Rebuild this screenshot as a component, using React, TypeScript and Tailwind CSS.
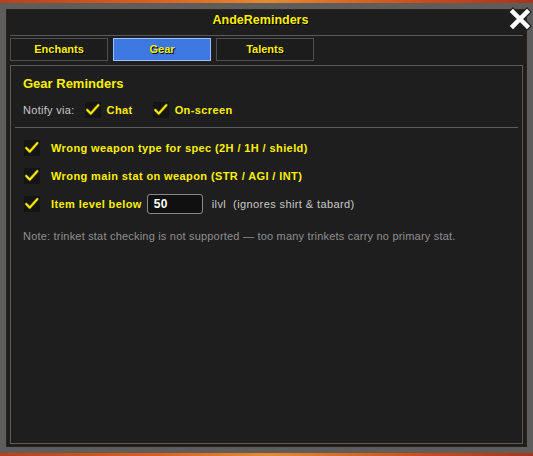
const font = { fontFamily: '"Liberation Sans", Arial, sans-serif' };

function Check() {
  return (
    <span className="flex h-[16px] w-[16px] shrink-0 items-center justify-center bg-[#141414]">
      <svg width="18" height="16" viewBox="0 0 18 16">
        <path d="M2.5 8 L6.5 12 L15 2.5" fill="none" stroke="#6b5a00" strokeWidth="3.5" strokeLinecap="round" strokeLinejoin="round" />
        <path d="M2.5 8 L6.5 12 L15 2.5" fill="none" stroke="#fff000" strokeWidth="2" strokeLinecap="round" strokeLinejoin="round" />
      </svg>
    </span>
  );
}

function Tab({ label, active }: { label: string; active?: boolean }) {
  return (
    <div
      className={
        active
          ? "flex h-[23px] w-[98px] items-center justify-center border border-[#9fc2ff] bg-[#3c78e0] text-[11px] font-bold text-[#fff000] [text-shadow:1px_1px_0_#000]"
          : "flex h-[23px] w-[98px] items-center justify-center border border-[#4e4e4e] bg-[#1c1c1c] text-[11px] font-bold text-[#fff000] [text-shadow:1px_1px_0_#000]"
      }
    >
      {label}
    </div>
  );
}

function Row({ children }: { children: React.ReactNode }) {
  return (
    <div className="flex h-[20px] items-center pl-[13px] text-[11px] font-bold tracking-[0.4px] text-[#fff000]">
      <Check />
      <span className="ml-[11px] flex items-center">{children}</span>
    </div>
  );
}

export default function App() {
  return (
    <div className="h-[456px] w-[533px] overflow-hidden bg-[linear-gradient(90deg,#b8401a,#d9621f_30%,#e7892f_50%,#c84b1b_80%,#a8351a)] py-[3px]" style={font}>
      <div className="relative flex h-full flex-col border-[6px] border-[#5d5d5d] bg-[#1e1e1e] shadow-[inset_0_0_0_1px_#2a2414]">
        <div className="flex h-[22px] items-center justify-center pr-[12px] text-[12.5px] font-bold text-[#fff000] [text-shadow:1px_1px_0_#000]">
          AndeReminders
        </div>
        <div className="mx-[4px] mt-[4px] h-px bg-[#5a5a5a]" />
        <div className="mx-[4px] mt-[2px] flex gap-[5px]">
          <Tab label="Enchants" />
          <Tab label="Gear" active />
          <Tab label="Talents" />
        </div>
        <div className="mx-[4px] mb-[3px] mt-[4px] flex flex-1 flex-col border border-[#5a5a5a] bg-[#1e1e1e] pt-[10px]">
          <div className="h-[16px] pl-[12px] text-[13px] font-bold leading-[16px] text-[#fff000]">Gear Reminders</div>
          <div className="mt-[9px] flex h-[18px] items-center pl-[12px] text-[11px] tracking-[0.3px] text-[#c8c8c8]">
            <span>Notify via:</span>
            <span className="ml-[10px]"><Check /></span>
            <span className="ml-[6px] font-bold tracking-[0.4px] text-[#fff000]">Chat</span>
            <span className="ml-[20px]"><Check /></span>
            <span className="ml-[6px] font-bold tracking-[0.4px] text-[#fff000]">On-screen</span>
          </div>
          <div className="mx-[4px] mt-[8px] h-px bg-[#5a5a5a]" />
          <div className="mt-[10px] flex flex-col gap-[8px]">
            <Row>Wrong weapon type for spec (2H / 1H / shield)</Row>
            <Row>Wrong main stat on weapon (STR / AGI / INT)</Row>
            <Row>
              <span>Item level below</span>
              <span className="ml-[5px] flex h-[20px] w-[56px] items-center rounded-[3px] border border-[#8a8a8a] bg-[#101010] px-[6px] text-[12px] font-bold text-white">
                50
              </span>
              <span className="ml-[9px] font-normal text-[#c8c8c8]">ilvl&nbsp;&nbsp;(ignores shirt &amp; tabard)</span>
            </Row>
          </div>
          <div className="mt-[16px] h-[12px] pl-[12px] text-[11px] leading-[12px] tracking-[0.2px] text-[#8f8f8f]">
            Note: trinket stat checking is not supported — too many trinkets carry no primary stat.
          </div>
        </div>
        <div className="absolute -right-[6px] -top-[3px]">
          <svg width="26" height="26" viewBox="0 0 26 26">
            <path d="M6 6 L20 20 M20 6 L6 20" stroke="#222" strokeWidth="7" strokeLinecap="square" />
            <path d="M6 6 L20 20 M20 6 L6 20" stroke="#fff" strokeWidth="4.5" strokeLinecap="square" />
          </svg>
        </div>
      </div>
    </div>
  );
}
